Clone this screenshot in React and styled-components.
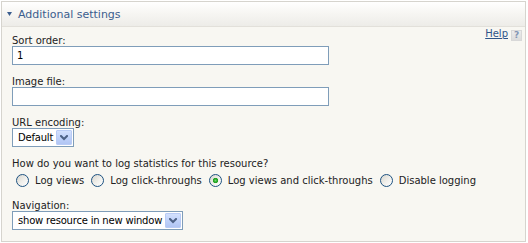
import React from 'react';
import styled, { createGlobalStyle } from 'styled-components';

const GlobalStyle = createGlobalStyle`
  html, body { margin: 0; padding: 0; background: #ffffff; }
  body {
    font-family: "DejaVu Sans", Verdana, sans-serif;
    font-size: 10px;
    color: #222222;
  }
`;

const Panel = styled.section`
  box-sizing: border-box;
  width: 525px;
  height: 241px;
  margin: 1px 0 0 1px;
  border: 1px solid #d6d4ce;
  background: #f8f7f2;
  display: flex;
  flex-direction: column;
`;

const Header = styled.div`
  box-sizing: border-box;
  height: 27px;
  border-bottom: 1px solid #e2e0da;
  background: linear-gradient(to bottom, #ffffff 0%, #f7f6f3 45%, #edece8 100%);
  display: flex;
  align-items: center;
  padding-left: 5px;
  gap: 6px;
`;

const Title = styled.span`
  font-size: 11px;
  line-height: 13px;
  color: #3b5d8e;
`;

const Body = styled.div`
  padding: 1px 2px 0 10px;
  display: flex;
  flex-direction: column;
`;

const HelpBar = styled.div`
  height: 7px;
  display: flex;
  justify-content: flex-end;
  align-items: flex-start;
  overflow: visible;
`;

const HelpLink = styled.a`
  font-size: 10px;
  line-height: 12px;
  color: #2f5589;
  text-decoration: underline;
  cursor: pointer;
`;

const HelpIcon = styled.span`
  box-sizing: border-box;
  width: 11px;
  height: 11px;
  margin: 2px 1px 0 3px;
  background: linear-gradient(to bottom, #ececec, #dcdcdc);
  border: 1px solid #d8d8d8;
  color: #8396b4;
  font-size: 9px;
  font-weight: bold;
  line-height: 9px;
  text-align: center;
`;

const Field = styled.div`
  display: flex;
  flex-direction: column;
  align-items: flex-start;
  margin-bottom: 11px;
`;

const Label = styled.label`
  line-height: 11px;
`;

const TextInput = styled.input`
  box-sizing: border-box;
  width: 317px;
  height: 19px;
  margin: 0;
  border: 1px solid #7f9db9;
  padding: 0 4px;
  background: #ffffff;
  font-family: "DejaVu Sans", Verdana, sans-serif;
  font-size: 10px;
  color: #000000;
  outline: none;
`;

const SelectBox = styled.div`
  box-sizing: border-box;
  width: ${(p) => p.$width}px;
  height: 19px;
  border: 1px solid #7f9db9;
  background: #ffffff;
  display: flex;
  align-items: center;
  padding: 1px;
`;

const SelectValue = styled.span`
  flex: 1;
  padding-left: 4px;
  line-height: 12px;
  letter-spacing: -0.2px;
  color: #000000;
  white-space: nowrap;
  overflow: hidden;
`;

const SelectButton = styled.span`
  box-sizing: border-box;
  flex: none;
  width: 16px;
  height: 15px;
  border: 1px solid #b9cbf5;
  border-radius: 1px;
  background: linear-gradient(to bottom, #d3e0fd 0%, #c0d2fa 50%, #b1c5f3 100%);
  display: flex;
  align-items: center;
  justify-content: center;
`;

const RadioRow = styled.div`
  display: flex;
  align-items: center;
  gap: 7px;
  margin-top: 3px;
  padding-left: 4px;
  height: 17px;
`;

const RadioOption = styled.label`
  display: inline-flex;
  align-items: center;
  gap: 6px;
  line-height: 12px;
  white-space: nowrap;
`;

const Radio = styled.input.attrs({ type: 'radio' })`
  appearance: none;
  -webkit-appearance: none;
  box-sizing: border-box;
  width: 13px;
  height: 13px;
  margin: 0;
  border-radius: 50%;
  border: 1px solid #1d5281;
  background: linear-gradient(135deg, #d8d6ce 0%, #f1f0ec 55%, #ffffff 100%);
  &:checked {
    background:
      radial-gradient(circle at 50% 50%, #6fdc6f 0, #2ba82b 1.6px, #21a121 2.4px, rgba(33,161,33,0) 3px),
      linear-gradient(135deg, #d8d6ce 0%, #f1f0ec 55%, #ffffff 100%);
  }
`;

const Chevron = () => (
  <svg width="8" height="6" viewBox="0 0 8 6">
    <path d="M1 1 L4 4 L7 1" fill="none" stroke="#4d6185" strokeWidth="2" strokeLinecap="square" />
  </svg>
);

const Triangle = () => (
  <svg width="5" height="4" viewBox="0 0 5 4">
    <path d="M0 0 H5 L2.5 4 Z" fill="#3b5d8e" />
  </svg>
);

const FakeSelect = ({ width, value }) => (
  <SelectBox $width={width}>
    <SelectValue>{value}</SelectValue>
    <SelectButton>
      <Chevron />
    </SelectButton>
  </SelectBox>
);

const options = [
  'Log views',
  'Log click-throughs',
  'Log views and click-throughs',
  'Disable logging',
];

export default function App() {
  return (
    <>
      <GlobalStyle />
      <Panel>
        <Header>
          <Triangle />
          <Title>Additional settings</Title>
        </Header>
        <Body>
          <HelpBar>
            <HelpLink>Help</HelpLink>
            <HelpIcon>?</HelpIcon>
          </HelpBar>
          <Field>
            <Label>Sort order:</Label>
            <TextInput defaultValue="1" />
          </Field>
          <Field>
            <Label>Image file:</Label>
            <TextInput defaultValue="" />
          </Field>
          <Field>
            <Label>URL encoding:</Label>
            <FakeSelect width={62} value="Default" />
          </Field>
          <Field>
            <Label>How do you want to log statistics for this resource?</Label>
            <RadioRow>
              {options.map((o, i) => (
                <RadioOption key={o}>
                  <Radio name="log" defaultChecked={i === 2} />
                  {o}
                </RadioOption>
              ))}
            </RadioRow>
          </Field>
          <Field>
            <Label>Navigation:</Label>
            <FakeSelect width={171} value="show resource in new window" />
          </Field>
        </Body>
      </Panel>
    </>
  );
}
